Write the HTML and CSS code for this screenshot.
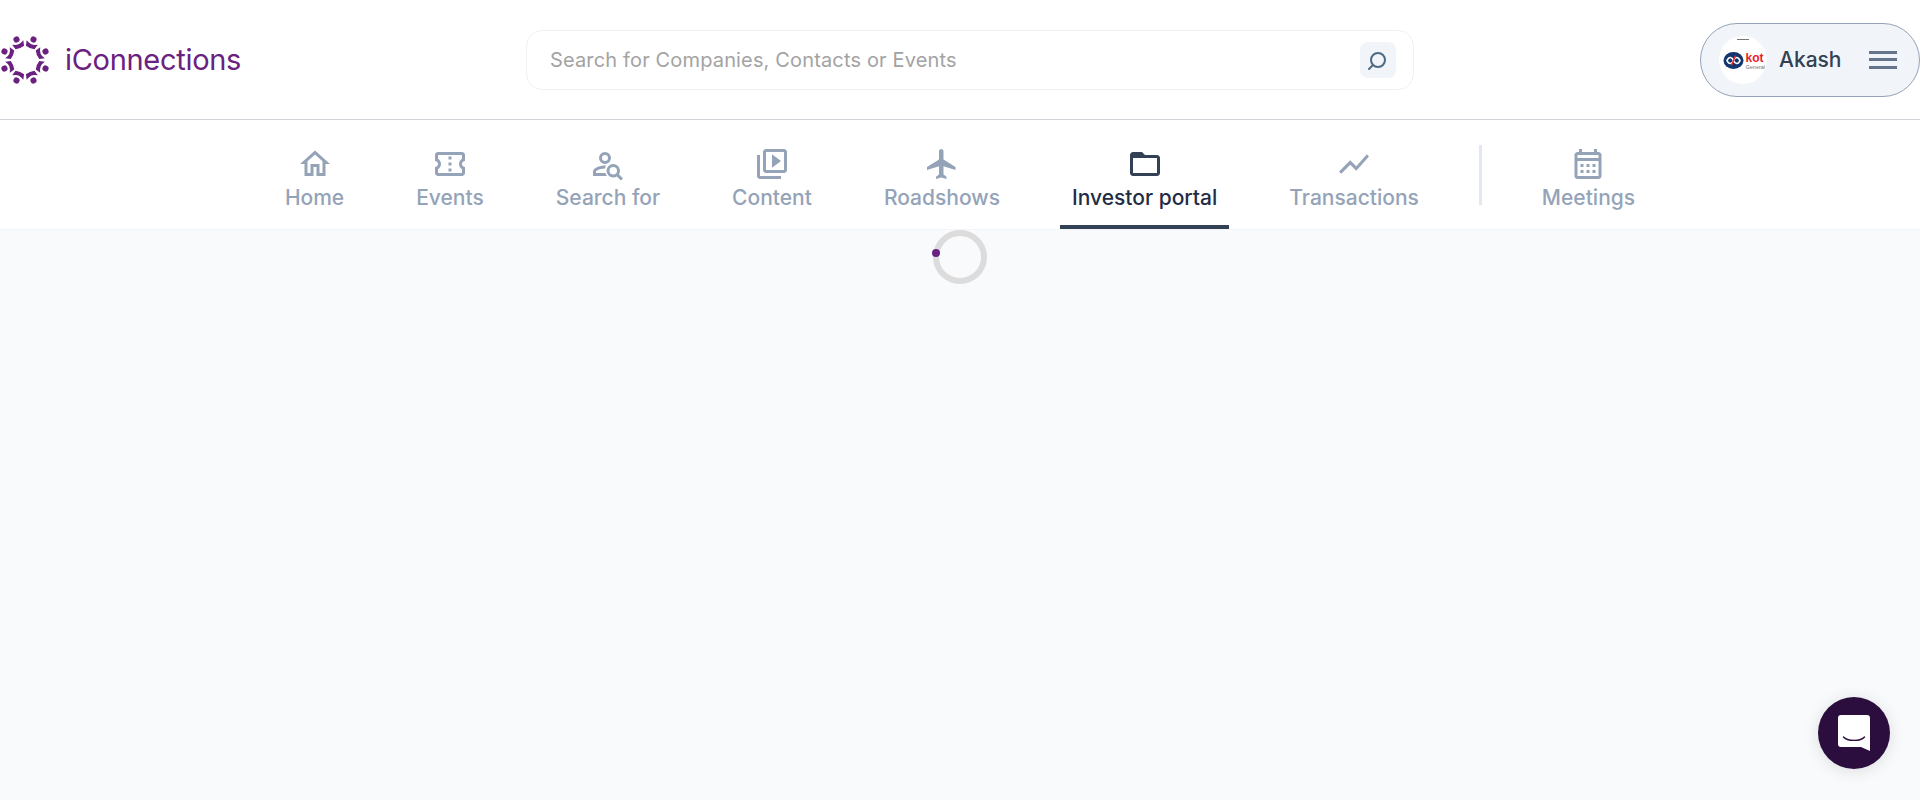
FILE: index.html
```html
<!DOCTYPE html>
<html lang="en">
<head>
<meta charset="UTF-8">
<meta name="viewport" content="width=device-width, initial-scale=1.0">
<title>iConnections</title>
<link rel="stylesheet" href="styles.css">
</head>
<body>

<!-- top bar -->
<header class="topBar">
  <a class="logo" href="#">
    <svg class="logoMark" width="50" height="52" viewBox="-27 -28 54 56">
      <defs>
        <g id="person">
          <circle cx="0" cy="-24" r="3.300"/>
          <path d="M-6.500 -20.500 L-3 -18.800 Q0 -17.600 3 -18.800 L6.500 -20.500 L5 -14.600 Q0 -13.200 -5 -14.600 Z"/>
        </g>
      </defs>
      <use href="#person" transform="rotate(22.5)"/>
      <use href="#person" transform="rotate(67.5)"/>
      <use href="#person" transform="rotate(112.5)"/>
      <use href="#person" transform="rotate(157.5)"/>
      <use href="#person" transform="rotate(202.5)"/>
      <use href="#person" transform="rotate(247.5)"/>
      <use href="#person" transform="rotate(292.5)"/>
      <use href="#person" transform="rotate(337.5)"/>
    </svg>
    <span class="logoText">iConnections</span>
  </a>

  <div class="searchBox">
    <span class="searchPlaceholder">Search for Companies, Contacts or Events</span>
    <button class="searchButton" type="button">
      <svg width="24" height="24" viewBox="0 0 24 24" fill="none" stroke="#4b6a85" stroke-width="2">
        <circle cx="12" cy="12" r="7"/>
        <path d="M7 17 L3 21" stroke-linecap="round"/>
      </svg>
    </button>
  </div>

  <div class="profile">
    <span class="avatar">
      <span class="avatarTick"></span>
      <svg width="44" height="22" viewBox="0 0 44 22">
        <ellipse cx="12.500" cy="11.500" rx="10" ry="8.500" fill="#14366f"/>
        <path d="M6 11.500 C8 7 11 8 12.500 11.500 C14 15 17 16 19 11.500 C17 7 14 8 12.500 11.500 C11 15 8 16 6 11.500 Z" fill="none" stroke="#fff" stroke-width="1.700"/>
        <path d="M14.500 6.500 L10.500 16.500" stroke="#e8222c" stroke-width="1.400"/>
        <text x="24.500" y="13" class="avatarKot">kot</text>
        <text x="24.500" y="19.500" class="avatarGeneral">General</text>
      </svg>
    </span>
    <span class="profileName">Akash</span>
    <span class="burger"><i></i><i></i><i></i></span>
  </div>
</header>

<!-- main nav -->
<nav class="mainNav">
  <a class="navItem" href="#">
    <svg class="navIcon" viewBox="0 0 24 24"><path d="M12 5.69l5 4.5V18h-2v-6H9v6H7v-7.81l5-4.5M12 3L2 12h3v8h6v-6h2v6h6v-8h3L12 3z"/></svg>
    <span>Home</span>
  </a>
  <a class="navItem" href="#">
    <svg class="navIcon" viewBox="0 0 24 24"><path d="M22 10V6c0-1.11-.9-2-2-2H4c-1.1 0-1.99.89-1.99 2v4c1.1 0 1.99.9 1.99 2s-.89 2-2 2v4c0 1.1.9 2 2 2h16c1.1 0 2-.9 2-2v-4c-1.1 0-2-.9-2-2s.9-2 2-2zm-2-1.46c-1.19.69-2 1.99-2 3.46s.81 2.77 2 3.46V18H4v-2.54c1.19-.69 2-1.99 2-3.46 0-1.48-.8-2.77-1.99-3.46L4 6h16v2.54zM11 15h2v2h-2zm0-4h2v2h-2zm0-4h2v2h-2z"/></svg>
    <span>Events</span>
  </a>
  <a class="navItem" href="#">
    <svg class="navIcon" viewBox="0 0 24 24">
      <path d="M10 12a4 4 0 1 0 0-8 4 4 0 0 0 0 8zm0-6a2 2 0 1 1 0 4 2 2 0 0 1 0-4z"/>
      <path d="M4 18v-.65c0-.34.16-.66.41-.81C6.100 15.530 8.030 15 10 15l.08.01c.1-.7.3-1.370.59-1.980L10 13c-2.420 0-4.680.67-6.610 1.820-.88.52-1.390 1.500-1.390 2.530V20h9.260c-.42-.6-.75-1.280-.97-2H4z"/>
      <path d="M19.300 18.900c.44-.7.7-1.510.7-2.400a4.500 4.500 0 1 0-4.500 4.500c.89 0 1.700-.26 2.400-.7l2.700 2.700 1.400-1.400-2.700-2.700zM15.500 19a2.500 2.500 0 1 1 0-5 2.500 2.500 0 0 1 0 5z"/>
    </svg>
    <span>Search for</span>
  </a>
  <a class="navItem" href="#">
    <svg class="navIcon" viewBox="0 0 24 24"><path d="M4 6H2v14c0 1.100.9 2 2 2h14v-2H4V6zm16-4H8c-1.100 0-2 .9-2 2v12c0 1.100.9 2 2 2h12c1.100 0 2-.9 2-2V4c0-1.100-.9-2-2-2zm0 14H8V4h12v12zM12 5.500v9l6-4.500z"/></svg>
    <span>Content</span>
  </a>
  <a class="navItem" href="#">
    <svg class="navIcon" viewBox="0 0 24 24"><path d="M21 16v-2l-8-5V3.500c0-.83-.67-1.500-1.500-1.500S10 2.670 10 3.500V9l-8 5v2l8-2.500V19l-2 1.500V22l3.500-1 3.500 1v-1.500L13 19v-5.500l8 2.500z"/></svg>
    <span>Roadshows</span>
  </a>
  <a class="navItem active" href="#">
    <svg class="navIcon" viewBox="0 0 24 24"><path d="M20 6h-8l-2-2H4c-1.100 0-1.990.9-1.990 2L2 18c0 1.100.9 2 2 2h16c1.100 0 2-.9 2-2V8c0-1.100-.9-2-2-2zm0 12H4V8h16v10z"/></svg>
    <span>Investor portal</span>
  </a>
  <a class="navItem" href="#">
    <svg class="navIcon" viewBox="0 0 24 24"><path d="M3.500 18.490l6-6.010 4 4L22 6.920l-1.410-1.410-7.090 7.970-4-4L2 16.990z"/></svg>
    <span>Transactions</span>
  </a>
  <div class="navDivider"></div>
  <a class="navItem" href="#">
    <svg class="navIcon" viewBox="0 0 24 24"><path d="M19 4h-1V2h-2v2H8V2H6v2H5c-1.110 0-1.990.9-1.990 2L3 20c0 1.100.89 2 2 2h14c1.100 0 2-.9 2-2V6c0-1.100-.9-2-2-2zm0 16H5V10h14v10zm0-12H5V6h14v2zM9 14H7v-2h2v2zm4 0h-2v-2h2v2zm4 0h-2v-2h2v2zm-8 4H7v-2h2v2zm4 0h-2v-2h2v2zm4 0h-2v-2h2v2z"/></svg>
    <span>Meetings</span>
  </a>
</nav>

<!-- page body, still loading -->
<main class="content">
  <div class="spinner"></div>
</main>

<button class="chatButton" type="button">
  <svg width="32" height="36" viewBox="0 0 32 36">
    <path d="M3 0h26a3 3 0 0 1 3 3v33l-9-4H3a3 3 0 0 1-3-3V3a3 3 0 0 1 3-3z" fill="#fff"/>
    <path d="M5.500 22C9 26.500 23 26.500 26.500 22" fill="none" stroke="#2b0d3e" stroke-width="1.400" stroke-linecap="round"/>
  </svg>
</button>

</body>
</html>
```

FILE: styles.css
```css
* {
  box-sizing: border-box;
}
html, body {
  height: 100%;
}
body {
  font-family: 'Inter', 'Liberation Sans', sans-serif;
  margin: 0;
  display: flex;
  flex-direction: column;
  background-color: #f9fafc;
  overflow: hidden;
}
a {
  text-decoration: none;
  color: inherit;
}

/* top bar */
.topBar {
  height: 120px;
  flex: none;
  display: flex;
  align-items: center;
  justify-content: space-between;
  background-color: #fff;
  border-bottom: 1px solid #cfd2d6;
}
.logo {
  display: flex;
  align-items: center;
  gap: 15px;
  width: 240px;
  color: #6a2180;
}
.logoMark {
  flex: none;
  fill: #6a2180;
}
.logoText {
  font-size: 29px;
  font-weight: 400;
  letter-spacing: -0.3px;
  line-height: 1;
}
.searchBox {
  width: 888px;
  height: 60px;
  display: flex;
  align-items: center;
  justify-content: space-between;
  padding: 0 17px 0 23px;
  border: 1px solid #f0f1f5;
  border-radius: 16px;
}
.searchPlaceholder {
  padding-top: 1px;
  font-size: 20px;
  letter-spacing: 0.15px;
  color: #a3a3a3;
}
.searchButton {
  width: 36px;
  height: 36px;
  padding: 0;
  display: flex;
  align-items: center;
  justify-content: center;
  background-color: #f1f5f9;
  border: none;
  border-radius: 8px;
}
.profile {
  width: 220px;
  height: 74px;
  display: flex;
  align-items: center;
  padding: 0 22px 0 18px;
  background-color: #f1f5f9;
  border: 1px solid #94a3b8;
  border-radius: 37px;
}
.avatar {
  position: relative;
  width: 48px;
  height: 48px;
  flex: none;
  display: flex;
  align-items: center;
  justify-content: center;
  background-color: #fff;
  border-radius: 50%;
}
.avatarTick {
  position: absolute;
  top: 3px;
  left: 18px;
  width: 12px;
  height: 1px;
  background-color: #777;
}
.avatarKot {
  font-family: 'Liberation Sans', sans-serif;
  font-size: 12px;
  font-weight: bold;
  fill: #e8222c;
}
.avatarGeneral {
  font-family: 'Liberation Sans', sans-serif;
  font-size: 5.500px;
  fill: #777;
}
.profileName {
  margin-left: 12px;
  font-size: 21px;
  font-weight: 500;
  color: #334155;
}
.burger {
  margin-left: auto;
  width: 28px;
  display: flex;
  flex-direction: column;
  gap: 4.500px;
}
.burger i {
  display: block;
  height: 3px;
  background-color: #64748b;
}

/* main nav */
.mainNav {
  height: 110px;
  flex: none;
  display: flex;
  justify-content: center;
  gap: 48px;
  background-color: #fff;
  border-bottom: 1px solid #f1f5f9;
}
.navItem {
  display: flex;
  flex-direction: column;
  align-items: center;
  padding: 26px 12px 0;
  font-size: 21px;
  font-weight: 500;
  line-height: 24px;
  color: #94a3b8;
  border-bottom: 4px solid transparent;
}
.navItem.active {
  color: #1f2d44;
  border-bottom-color: #334155;
}
.navIcon {
  width: 36px;
  height: 36px;
  margin-bottom: 4px;
  fill: #94a3b8;
}
.navItem.active .navIcon {
  fill: #334155;
}
.navDivider {
  width: 3px;
  height: 60px;
  margin-top: 25px;
  background-color: #e2e8f0;
}

/* loading */
.content {
  flex: 1;
  display: flex;
  justify-content: center;
}
.spinner {
  position: relative;
  width: 54px;
  height: 54px;
  border: 6px solid #dcdcdc;
  border-radius: 50%;
}
.spinner::after {
  content: "";
  position: absolute;
  top: 13px;
  left: -7px;
  width: 8px;
  height: 8px;
  background-color: #6a2180;
  border-radius: 50%;
}

.chatButton {
  position: fixed;
  right: 30px;
  bottom: 31px;
  width: 72px;
  height: 72px;
  padding: 0;
  display: flex;
  align-items: center;
  justify-content: center;
  background-color: #2b0d3e;
  border: none;
  border-radius: 50%;
  box-shadow: 0 2px 16px rgba(0, 0, 0, 0.12);
}
```
